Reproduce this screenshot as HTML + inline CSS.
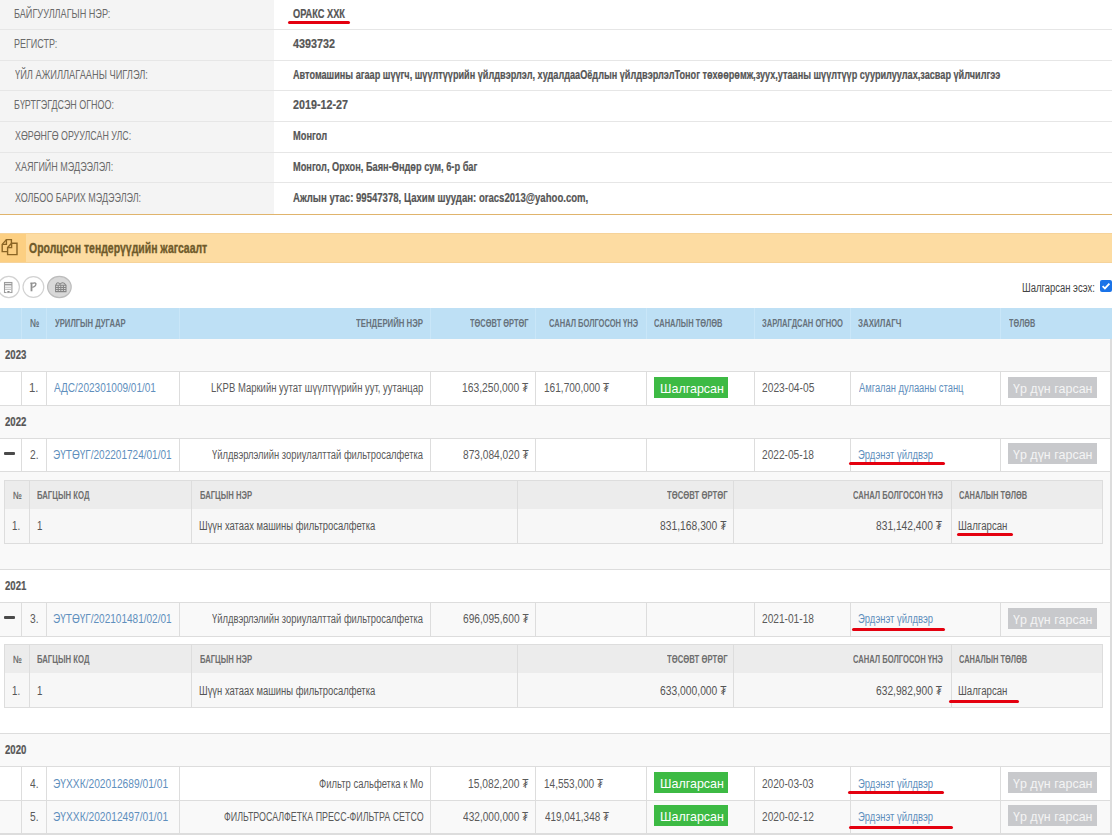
<!DOCTYPE html><html><head><meta charset="utf-8"><style>
*{margin:0;padding:0;box-sizing:border-box}
html,body{width:1118px;height:838px;overflow:hidden;background:#fff;font-family:'Liberation Sans', sans-serif}
.t{position:absolute;white-space:nowrap;transform-origin:0 50%}
.b{position:absolute}
</style></head><body>
<div class="b" style="left:0px;top:0px;width:274px;height:214px;background:#f4f4f4"></div>
<div class="b" style="left:0px;top:29px;width:1112px;height:1px;background:#e6e6e6"></div>
<div class="b" style="left:0px;top:60px;width:1112px;height:1px;background:#e6e6e6"></div>
<div class="b" style="left:0px;top:90px;width:1112px;height:1px;background:#e6e6e6"></div>
<div class="b" style="left:0px;top:121px;width:1112px;height:1px;background:#e6e6e6"></div>
<div class="b" style="left:0px;top:152px;width:1112px;height:1px;background:#e6e6e6"></div>
<div class="b" style="left:0px;top:182px;width:1112px;height:1px;background:#e6e6e6"></div>
<div class="b" style="left:0px;top:214px;width:1112px;height:1px;background:#e0b46c"></div>
<div class="b" style="left:287.5px;top:20.9px;width:62.30000000000001px;height:3px;background:#e4000f;border-radius:2px"></div>
<div class="b" style="left:0px;top:233px;width:1112px;height:30px;background:#fddca2"></div>
<div class="b" style="left:0px;top:233px;width:26px;height:30px;background:#fccf82"></div>
<div class="b" style="left:0px;top:233px;width:1112px;height:1px;background:#f6d39a"></div>
<div class="b" style="left:0px;top:262px;width:1112px;height:1px;background:#f6d39a"></div>
<svg class="b" style="left:0;top:235px" width="24" height="25" viewBox="0 0 24 25">
<g fill="none" stroke="#8a6424" stroke-width="1.4" stroke-linejoin="miter">
<path d="M7.5 16.6 H2.2 V9.4 L6.4 4.6 H11.4 V8.3"/>
<path d="M2.2 9.4 H6.4 V4.6"/>
<path d="M7.6 12.6 L11.6 8.3 H17 V19.6 H7.6 Z"/>
<path d="M7.6 12.6 H11.6 V8.3"/>
</g></svg>
<svg class="b" style="left:0;top:270px" width="80" height="34" viewBox="0 0 80 34">
<circle cx="8.8" cy="17" r="10.6" fill="#fff" stroke="#d2d2d2" stroke-width="1.2"/>
<circle cx="33.4" cy="17" r="10.4" fill="#fff" stroke="#d2d2d2" stroke-width="1.2"/>
<ellipse cx="59.4" cy="17" rx="11.8" ry="10.6" fill="#d8d8d8" stroke="#bcbcbc" stroke-width="1.2"/>
<g fill="none" stroke="#9c9c9c" stroke-width="1.1">
<rect x="4.5" y="12.5" width="7.4" height="10"/>
<path d="M4.5 14.6 H11.9" stroke-width="1.6"/>
<path d="M5 17.2 H11.4 M5 19.4 H11.4" stroke="#c4c4c4"/>
</g>
<path d="M6.2 22.6 V21.4 Q8.2 19.6 10.2 21.4 V22.6 Z" fill="#fff"/>
<rect x="7.4" y="21" width="2.2" height="1.6" fill="#8a8a8a"/>
<g fill="none" stroke="#8f8f8f">
<path d="M31.5 12.8 V21.3" stroke-width="1.8"/>
<path d="M30.4 13.2 H32.4" stroke-width="1.2"/>
<path d="M32.3 13.4 Q35.2 12.2 35.9 13.6 Q36.2 16.2 32.3 17.4" stroke-width="1.3"/>
</g>
<g fill="none" stroke="#858585" stroke-width="1.05">
<path d="M55.6 15.2 H66 V21.6 H55.6 Z"/>
<path d="M55.6 17.4 H66 M55.6 19.5 H66 M58.2 15.2 V21.6 M60.8 15.2 V21.6 M63.4 15.2 V21.6"/>
<path d="M56 15.2 Q56.4 12.6 58 12.8 Q59.6 13 60 14.6 Q60.4 13 62.4 12.8 Q64.8 12.6 65.6 15.2"/>
</g>
</svg>
<svg class="b" style="left:1100px;top:280px" width="12" height="12" viewBox="0 0 12 12">
<rect x="0" y="0" width="12" height="12" rx="2" fill="#1a73e8"/>
<path d="M2.6 6.2 L4.9 8.4 L9.4 3.6" fill="none" stroke="#fff" stroke-width="1.8"/>
</svg>
<div class="b" style="left:0px;top:308px;width:1111.5px;height:31px;background:#bee0f5"></div>
<div class="b" style="left:21px;top:308px;width:1px;height:31px;background:#c9e6f8"></div>
<div class="b" style="left:46px;top:308px;width:1px;height:31px;background:#c9e6f8"></div>
<div class="b" style="left:179px;top:308px;width:1px;height:31px;background:#c9e6f8"></div>
<div class="b" style="left:430px;top:308px;width:1px;height:31px;background:#c9e6f8"></div>
<div class="b" style="left:535px;top:308px;width:1px;height:31px;background:#c9e6f8"></div>
<div class="b" style="left:646px;top:308px;width:1px;height:31px;background:#c9e6f8"></div>
<div class="b" style="left:754px;top:308px;width:1px;height:31px;background:#c9e6f8"></div>
<div class="b" style="left:850px;top:308px;width:1px;height:31px;background:#c9e6f8"></div>
<div class="b" style="left:1000px;top:308px;width:1px;height:31px;background:#c9e6f8"></div>
<div class="b" style="left:0px;top:339px;width:1111.5px;height:32px;background:#f9f9f9"></div>
<div class="b" style="left:0px;top:371px;width:1111.5px;height:34px;background:#fff"></div>
<div class="b" style="left:0px;top:405px;width:1111.5px;height:33px;background:#f9f9f9"></div>
<div class="b" style="left:0px;top:438px;width:1111.5px;height:33px;background:#fff"></div>
<div class="b" style="left:0px;top:471px;width:1111.5px;height:98px;background:#f9f9f9"></div>
<div class="b" style="left:0px;top:569px;width:1111.5px;height:33px;background:#fff"></div>
<div class="b" style="left:0px;top:602px;width:1111.5px;height:34px;background:#f9f9f9"></div>
<div class="b" style="left:0px;top:636px;width:1111.5px;height:97px;background:#fff"></div>
<div class="b" style="left:0px;top:733px;width:1111.5px;height:33px;background:#f9f9f9"></div>
<div class="b" style="left:0px;top:766px;width:1111.5px;height:34px;background:#fff"></div>
<div class="b" style="left:0px;top:800px;width:1111.5px;height:33px;background:#f9f9f9"></div>
<div class="b" style="left:0px;top:371px;width:1111.5px;height:1px;background:#dddddd"></div>
<div class="b" style="left:0px;top:405px;width:1111.5px;height:1px;background:#dddddd"></div>
<div class="b" style="left:0px;top:438px;width:1111.5px;height:1px;background:#dddddd"></div>
<div class="b" style="left:0px;top:471px;width:1111.5px;height:1px;background:#dddddd"></div>
<div class="b" style="left:0px;top:569px;width:1111.5px;height:1px;background:#dddddd"></div>
<div class="b" style="left:0px;top:602px;width:1111.5px;height:1px;background:#dddddd"></div>
<div class="b" style="left:0px;top:636px;width:1111.5px;height:1px;background:#dddddd"></div>
<div class="b" style="left:0px;top:733px;width:1111.5px;height:1px;background:#dddddd"></div>
<div class="b" style="left:0px;top:766px;width:1111.5px;height:1px;background:#dddddd"></div>
<div class="b" style="left:0px;top:800px;width:1111.5px;height:1px;background:#dddddd"></div>
<div class="b" style="left:0px;top:833px;width:1111.5px;height:2px;background:#dddddd"></div>
<div class="b" style="left:1110px;top:339px;width:2px;height:496px;background:#dcdcdc"></div>
<div class="b" style="left:21px;top:371px;width:1px;height:34px;background:#dddddd"></div>
<div class="b" style="left:46px;top:371px;width:1px;height:34px;background:#dddddd"></div>
<div class="b" style="left:179px;top:371px;width:1px;height:34px;background:#dddddd"></div>
<div class="b" style="left:430px;top:371px;width:1px;height:34px;background:#dddddd"></div>
<div class="b" style="left:535px;top:371px;width:1px;height:34px;background:#dddddd"></div>
<div class="b" style="left:646px;top:371px;width:1px;height:34px;background:#dddddd"></div>
<div class="b" style="left:754px;top:371px;width:1px;height:34px;background:#dddddd"></div>
<div class="b" style="left:850px;top:371px;width:1px;height:34px;background:#dddddd"></div>
<div class="b" style="left:1000px;top:371px;width:1px;height:34px;background:#dddddd"></div>
<div class="b" style="left:21px;top:438px;width:1px;height:33px;background:#dddddd"></div>
<div class="b" style="left:46px;top:438px;width:1px;height:33px;background:#dddddd"></div>
<div class="b" style="left:179px;top:438px;width:1px;height:33px;background:#dddddd"></div>
<div class="b" style="left:430px;top:438px;width:1px;height:33px;background:#dddddd"></div>
<div class="b" style="left:535px;top:438px;width:1px;height:33px;background:#dddddd"></div>
<div class="b" style="left:646px;top:438px;width:1px;height:33px;background:#dddddd"></div>
<div class="b" style="left:754px;top:438px;width:1px;height:33px;background:#dddddd"></div>
<div class="b" style="left:850px;top:438px;width:1px;height:33px;background:#dddddd"></div>
<div class="b" style="left:1000px;top:438px;width:1px;height:33px;background:#dddddd"></div>
<div class="b" style="left:21px;top:602px;width:1px;height:34px;background:#dddddd"></div>
<div class="b" style="left:46px;top:602px;width:1px;height:34px;background:#dddddd"></div>
<div class="b" style="left:179px;top:602px;width:1px;height:34px;background:#dddddd"></div>
<div class="b" style="left:430px;top:602px;width:1px;height:34px;background:#dddddd"></div>
<div class="b" style="left:535px;top:602px;width:1px;height:34px;background:#dddddd"></div>
<div class="b" style="left:646px;top:602px;width:1px;height:34px;background:#dddddd"></div>
<div class="b" style="left:754px;top:602px;width:1px;height:34px;background:#dddddd"></div>
<div class="b" style="left:850px;top:602px;width:1px;height:34px;background:#dddddd"></div>
<div class="b" style="left:1000px;top:602px;width:1px;height:34px;background:#dddddd"></div>
<div class="b" style="left:21px;top:766px;width:1px;height:34px;background:#dddddd"></div>
<div class="b" style="left:46px;top:766px;width:1px;height:34px;background:#dddddd"></div>
<div class="b" style="left:179px;top:766px;width:1px;height:34px;background:#dddddd"></div>
<div class="b" style="left:430px;top:766px;width:1px;height:34px;background:#dddddd"></div>
<div class="b" style="left:535px;top:766px;width:1px;height:34px;background:#dddddd"></div>
<div class="b" style="left:646px;top:766px;width:1px;height:34px;background:#dddddd"></div>
<div class="b" style="left:754px;top:766px;width:1px;height:34px;background:#dddddd"></div>
<div class="b" style="left:850px;top:766px;width:1px;height:34px;background:#dddddd"></div>
<div class="b" style="left:1000px;top:766px;width:1px;height:34px;background:#dddddd"></div>
<div class="b" style="left:21px;top:800px;width:1px;height:33px;background:#dddddd"></div>
<div class="b" style="left:46px;top:800px;width:1px;height:33px;background:#dddddd"></div>
<div class="b" style="left:179px;top:800px;width:1px;height:33px;background:#dddddd"></div>
<div class="b" style="left:430px;top:800px;width:1px;height:33px;background:#dddddd"></div>
<div class="b" style="left:535px;top:800px;width:1px;height:33px;background:#dddddd"></div>
<div class="b" style="left:646px;top:800px;width:1px;height:33px;background:#dddddd"></div>
<div class="b" style="left:754px;top:800px;width:1px;height:33px;background:#dddddd"></div>
<div class="b" style="left:850px;top:800px;width:1px;height:33px;background:#dddddd"></div>
<div class="b" style="left:1000px;top:800px;width:1px;height:33px;background:#dddddd"></div>
<div class="b" style="left:654px;top:377px;width:74px;height:21px;background:#3dba44"></div>
<span class="t" style="left:660.4px;top:382px;font-size:13px;line-height:13px;color:#ffffff;transform:scaleX(0.96)">Шалгарсан</span>
<div class="b" style="left:1008px;top:377px;width:89px;height:21px;background:#c8c9cc"></div>
<span class="t" style="left:1013px;top:382px;font-size:13px;line-height:13px;color:#f4f4f4;transform:scaleX(0.96)">Үр дүн гарсан</span>
<div class="b" style="left:1008px;top:443px;width:89px;height:21px;background:#c8c9cc"></div>
<span class="t" style="left:1013px;top:448px;font-size:13px;line-height:13px;color:#f4f4f4;transform:scaleX(0.96)">Үр дүн гарсан</span>
<div class="b" style="left:4.2px;top:452px;width:10.7px;height:2.7px;background:#4a4a4a;border-radius:1px"></div>
<div class="b" style="left:849.4px;top:462.09999999999997px;width:95.20000000000005px;height:2.6px;background:#e4000f;border-radius:2px"></div>
<div class="b" style="left:1008px;top:608px;width:89px;height:21px;background:#c8c9cc"></div>
<span class="t" style="left:1013px;top:613px;font-size:13px;line-height:13px;color:#f4f4f4;transform:scaleX(0.96)">Үр дүн гарсан</span>
<div class="b" style="left:4.2px;top:616px;width:10.7px;height:2.7px;background:#4a4a4a;border-radius:1px"></div>
<div class="b" style="left:852.3px;top:628.2px;width:92.30000000000007px;height:2.6px;background:#e4000f;border-radius:2px"></div>
<div class="b" style="left:654px;top:772px;width:74px;height:21px;background:#3dba44"></div>
<span class="t" style="left:660.4px;top:777px;font-size:13px;line-height:13px;color:#ffffff;transform:scaleX(0.96)">Шалгарсан</span>
<div class="b" style="left:1008px;top:772px;width:89px;height:21px;background:#c8c9cc"></div>
<span class="t" style="left:1013px;top:777px;font-size:13px;line-height:13px;color:#f4f4f4;transform:scaleX(0.96)">Үр дүн гарсан</span>
<div class="b" style="left:848.4px;top:791.4000000000001px;width:95.5px;height:2.6px;background:#e4000f;border-radius:2px"></div>
<div class="b" style="left:654px;top:805px;width:74px;height:21px;background:#3dba44"></div>
<span class="t" style="left:660.4px;top:810px;font-size:13px;line-height:13px;color:#ffffff;transform:scaleX(0.96)">Шалгарсан</span>
<div class="b" style="left:1008px;top:805px;width:89px;height:21px;background:#c8c9cc"></div>
<span class="t" style="left:1013px;top:810px;font-size:13px;line-height:13px;color:#f4f4f4;transform:scaleX(0.96)">Үр дүн гарсан</span>
<div class="b" style="left:849.4px;top:826.0px;width:103.30000000000007px;height:2.6px;background:#e4000f;border-radius:2px"></div>
<div class="b" style="left:4.2px;top:480.2px;width:1098.4px;height:29px;background:#ececec"></div>
<div class="b" style="left:4.2px;top:509.2px;width:1098.4px;height:34px;background:#f7f7f7"></div>
<div class="b" style="left:4.2px;top:480.2px;width:1098.4px;height:63.5px;border:1px solid #dddddd"></div>
<div class="b" style="left:29.2px;top:480.2px;width:1px;height:63.5px;background:#dddddd"></div>
<div class="b" style="left:191.3px;top:480.2px;width:1px;height:63.5px;background:#dddddd"></div>
<div class="b" style="left:516.5px;top:480.2px;width:1px;height:63.5px;background:#dddddd"></div>
<div class="b" style="left:733.2px;top:480.2px;width:1px;height:63.5px;background:#dddddd"></div>
<div class="b" style="left:950.8px;top:480.2px;width:1px;height:63.5px;background:#dddddd"></div>
<div class="b" style="left:956.5px;top:533.2px;width:56.39999999999998px;height:2.6px;background:#e4000f;border-radius:2px"></div>
<div class="b" style="left:4.2px;top:644.3px;width:1098.4px;height:29px;background:#ececec"></div>
<div class="b" style="left:4.2px;top:673.3px;width:1098.4px;height:34px;background:#f7f7f7"></div>
<div class="b" style="left:4.2px;top:644.3px;width:1098.4px;height:63.5px;border:1px solid #dddddd"></div>
<div class="b" style="left:29.2px;top:644.3px;width:1px;height:63.5px;background:#dddddd"></div>
<div class="b" style="left:191.3px;top:644.3px;width:1px;height:63.5px;background:#dddddd"></div>
<div class="b" style="left:516.5px;top:644.3px;width:1px;height:63.5px;background:#dddddd"></div>
<div class="b" style="left:733.2px;top:644.3px;width:1px;height:63.5px;background:#dddddd"></div>
<div class="b" style="left:950.8px;top:644.3px;width:1px;height:63.5px;background:#dddddd"></div>
<div class="b" style="left:949.4px;top:700.2px;width:69.30000000000007px;height:2.6px;background:#e4000f;border-radius:2px"></div>
<span id="t0" class="t" style="left:13.97px;top:8px;font-size:12.5px;line-height:12.5px;font-weight:400;color:#6a6a6a;transform:scaleX(0.7292);">БАЙГУУЛЛАГЫН НЭР:</span>
<span id="t1" class="t" style="left:13.98px;top:38px;font-size:12.5px;line-height:12.5px;font-weight:400;color:#6a6a6a;transform:scaleX(0.7190);">РЕГИСТР:</span>
<span id="t2" class="t" style="left:14.7px;top:69px;font-size:12.5px;line-height:12.5px;font-weight:400;color:#6a6a6a;transform:scaleX(0.7416);">ҮЙЛ АЖИЛЛАГААНЫ ЧИГЛЭЛ:</span>
<span id="t3" class="t" style="left:13.98px;top:99px;font-size:12.5px;line-height:12.5px;font-weight:400;color:#6a6a6a;transform:scaleX(0.7167);">БҮРТГЭГДСЭН ОГНОО:</span>
<span id="t4" class="t" style="left:14.7px;top:130px;font-size:12.5px;line-height:12.5px;font-weight:400;color:#6a6a6a;transform:scaleX(0.7067);">ХӨРӨНГӨ ОРУУЛСАН УЛС:</span>
<span id="t5" class="t" style="left:14.7px;top:161px;font-size:12.5px;line-height:12.5px;font-weight:400;color:#6a6a6a;transform:scaleX(0.7206);">ХАЯГИЙН МЭДЭЭЛЭЛ:</span>
<span id="t6" class="t" style="left:14.7px;top:192px;font-size:12.5px;line-height:12.5px;font-weight:400;color:#6a6a6a;transform:scaleX(0.7183);">ХОЛБОО БАРИХ МЭДЭЭЛЭЛ:</span>
<span id="t7" class="t" style="left:293.0px;top:8px;font-size:12.5px;line-height:12.5px;font-weight:700;color:#555555;transform:scaleX(0.7394);-webkit-text-stroke:0.2px #555555;">ОРАКС ХХК</span>
<span id="t8" class="t" style="left:293.0px;top:38px;font-size:12.5px;line-height:12.5px;font-weight:700;color:#555555;transform:scaleX(0.8612);-webkit-text-stroke:0.2px #555555;">4393732</span>
<span id="t9" class="t" style="left:293.0px;top:69px;font-size:12.5px;line-height:12.5px;font-weight:700;color:#555555;transform:scaleX(0.7302);-webkit-text-stroke:0.2px #555555;">Автомашины агаар шүүгч, шүүлтүүрийн үйлдвэрлэл, худалдааОёдлын үйлдвэрлэлТоног төхөөрөмж,зуух,утааны шүүлтүүр суурилуулах,засвар үйлчилгээ</span>
<span id="t10" class="t" style="left:293.0px;top:99px;font-size:12.5px;line-height:12.5px;font-weight:700;color:#555555;transform:scaleX(0.8594);-webkit-text-stroke:0.2px #555555;">2019-12-27</span>
<span id="t11" class="t" style="left:293.0px;top:130px;font-size:12.5px;line-height:12.5px;font-weight:700;color:#555555;transform:scaleX(0.7435);-webkit-text-stroke:0.2px #555555;">Монгол</span>
<span id="t12" class="t" style="left:293.0px;top:161px;font-size:12.5px;line-height:12.5px;font-weight:700;color:#555555;transform:scaleX(0.7380);-webkit-text-stroke:0.2px #555555;">Монгол, Орхон, Баян-Өндөр сум, 6-р баг</span>
<span id="t13" class="t" style="left:293.0px;top:192px;font-size:12.5px;line-height:12.5px;font-weight:700;color:#555555;transform:scaleX(0.7655);-webkit-text-stroke:0.2px #555555;">Ажлын утас: 99547378, Цахим шуудан: oracs2013@yahoo.com,</span>
<span id="t14" class="t" style="left:28.6px;top:241px;font-size:14px;line-height:14px;font-weight:700;color:#6f5a2a;transform:scaleX(0.7464);-webkit-text-stroke:0.35px #6f5a2a;">Оролцсон тендерүүдийн жагсаалт</span>
<span id="t15" class="t" style="left:1022.34px;top:282px;font-size:12.5px;line-height:12.5px;font-weight:400;color:#444444;transform:scaleX(0.7574);">Шалгарсан эсэх:</span>
<span id="t16" class="t" style="left:29.5px;top:318px;font-size:11.5px;line-height:11.5px;font-weight:700;color:#66727c;transform:scaleX(0.7308);">№</span>
<span id="t17" class="t" style="left:54.6px;top:318px;font-size:11.5px;line-height:11.5px;font-weight:700;color:#66727c;transform:scaleX(0.6660);">УРИЛГЫН ДУГААР</span>
<span id="t18" class="t" style="left:355.8px;top:318px;font-size:11.5px;line-height:11.5px;font-weight:700;color:#66727c;transform:scaleX(0.6788);">ТЕНДЕРИЙН НЭР</span>
<span id="t19" class="t" style="left:469.6px;top:318px;font-size:11.5px;line-height:11.5px;font-weight:700;color:#66727c;transform:scaleX(0.6489);">ТӨСӨВТ ӨРТӨГ</span>
<span id="t20" class="t" style="left:549.3px;top:318px;font-size:11.5px;line-height:11.5px;font-weight:700;color:#66727c;transform:scaleX(0.6551);">САНАЛ БОЛГОСОН ҮНЭ</span>
<span id="t21" class="t" style="left:654.2px;top:318px;font-size:11.5px;line-height:11.5px;font-weight:700;color:#66727c;transform:scaleX(0.6514);">САНАЛЫН ТӨЛӨВ</span>
<span id="t22" class="t" style="left:762.0px;top:318px;font-size:11.5px;line-height:11.5px;font-weight:700;color:#66727c;transform:scaleX(0.6593);">ЗАРЛАГДСАН ОГНОО</span>
<span id="t23" class="t" style="left:858.3px;top:318px;font-size:11.5px;line-height:11.5px;font-weight:700;color:#66727c;transform:scaleX(0.6935);">ЗАХИЛАГЧ</span>
<span id="t24" class="t" style="left:1008.8px;top:318px;font-size:11.5px;line-height:11.5px;font-weight:700;color:#66727c;transform:scaleX(0.6341);">ТӨЛӨВ</span>
<span id="t25" class="t" style="left:4.5px;top:349px;font-size:12.5px;line-height:12.5px;font-weight:700;color:#555555;transform:scaleX(0.7679);-webkit-text-stroke:0.2px #555555;">2023</span>
<span id="t26" class="t" style="left:4.5px;top:416px;font-size:12.5px;line-height:12.5px;font-weight:700;color:#555555;transform:scaleX(0.7679);-webkit-text-stroke:0.2px #555555;">2022</span>
<span id="t27" class="t" style="left:4.5px;top:580px;font-size:12.5px;line-height:12.5px;font-weight:700;color:#555555;transform:scaleX(0.7679);-webkit-text-stroke:0.2px #555555;">2021</span>
<span id="t28" class="t" style="left:4.5px;top:744px;font-size:12.5px;line-height:12.5px;font-weight:700;color:#555555;transform:scaleX(0.7679);-webkit-text-stroke:0.2px #555555;">2020</span>
<span id="t29" class="t" style="left:28.59px;top:382px;font-size:12.5px;line-height:12.5px;font-weight:400;color:#5a5a5a;transform:scaleX(0.9111);">1.</span>
<span id="t30" class="t" style="left:54.2px;top:382px;font-size:12.5px;line-height:12.5px;font-weight:400;color:#5f8fbd;transform:scaleX(0.8024);">АДС/202301009/01/01</span>
<span id="t31" class="t" style="left:210.54px;top:382px;font-size:12.5px;line-height:12.5px;font-weight:400;color:#5a5a5a;transform:scaleX(0.7588);">LKPB Маркийн уутат шүүлтүүрийн уут, уутанцар</span>
<span id="t32" class="t" style="left:461.78px;top:382px;font-size:12.5px;line-height:12.5px;font-weight:400;color:#5a5a5a;transform:scaleX(0.8237);">163,250,000 ₮</span>
<span id="t33" class="t" style="left:543.79px;top:382px;font-size:12.5px;line-height:12.5px;font-weight:400;color:#5a5a5a;transform:scaleX(0.8075);">161,700,000 ₮</span>
<span id="t34" class="t" style="left:762.2px;top:382px;font-size:12.5px;line-height:12.5px;font-weight:400;color:#5a5a5a;transform:scaleX(0.8187);">2023-04-05</span>
<span id="t35" class="t" style="left:858.5px;top:382px;font-size:12.5px;line-height:12.5px;font-weight:400;color:#5f8fbd;transform:scaleX(0.7486);">Амгалан дулааны станц</span>
<span id="t36" class="t" style="left:29.5px;top:449px;font-size:12.5px;line-height:12.5px;font-weight:400;color:#5a5a5a;transform:scaleX(0.8200);">2.</span>
<span id="t37" class="t" style="left:53.4px;top:449px;font-size:12.5px;line-height:12.5px;font-weight:400;color:#5f8fbd;transform:scaleX(0.8027);">ЭҮТӨҮГ/202201724/01/01</span>
<span id="t38" class="t" style="left:212.2px;top:449px;font-size:12.5px;line-height:12.5px;font-weight:400;color:#5a5a5a;transform:scaleX(0.7502);">Үйлдвэрлэлийн зориулалттай фильтросалфетка</span>
<span id="t39" class="t" style="left:462.6px;top:449px;font-size:12.5px;line-height:12.5px;font-weight:400;color:#5a5a5a;transform:scaleX(0.8136);">873,084,020 ₮</span>
<span id="t40" class="t" style="left:762.2px;top:449px;font-size:12.5px;line-height:12.5px;font-weight:400;color:#5a5a5a;transform:scaleX(0.8125);">2022-05-18</span>
<span id="t41" class="t" style="left:857.74px;top:449px;font-size:12.5px;line-height:12.5px;font-weight:400;color:#5f8fbd;transform:scaleX(0.7551);">Эрдэнэт үйлдвэр</span>
<span id="t42" class="t" style="left:29.5px;top:613px;font-size:12.5px;line-height:12.5px;font-weight:400;color:#5a5a5a;transform:scaleX(0.8200);">3.</span>
<span id="t43" class="t" style="left:53.4px;top:613px;font-size:12.5px;line-height:12.5px;font-weight:400;color:#5f8fbd;transform:scaleX(0.8027);">ЭҮТӨҮГ/202101481/02/01</span>
<span id="t44" class="t" style="left:212.2px;top:613px;font-size:12.5px;line-height:12.5px;font-weight:400;color:#5a5a5a;transform:scaleX(0.7502);">Үйлдвэрлэлийн зориулалттай фильтросалфетка</span>
<span id="t45" class="t" style="left:462.6px;top:613px;font-size:12.5px;line-height:12.5px;font-weight:400;color:#5a5a5a;transform:scaleX(0.8136);">696,095,600 ₮</span>
<span id="t46" class="t" style="left:762.2px;top:613px;font-size:12.5px;line-height:12.5px;font-weight:400;color:#5a5a5a;transform:scaleX(0.8125);">2021-01-18</span>
<span id="t47" class="t" style="left:857.74px;top:613px;font-size:12.5px;line-height:12.5px;font-weight:400;color:#5f8fbd;transform:scaleX(0.7551);">Эрдэнэт үйлдвэр</span>
<span id="t48" class="t" style="left:29.5px;top:778px;font-size:12.5px;line-height:12.5px;font-weight:400;color:#5a5a5a;transform:scaleX(0.8200);">4.</span>
<span id="t49" class="t" style="left:53.38px;top:778px;font-size:12.5px;line-height:12.5px;font-weight:400;color:#5f8fbd;transform:scaleX(0.8179);">ЭҮХХК/202012689/01/01</span>
<span id="t50" class="t" style="left:318.5px;top:778px;font-size:12.5px;line-height:12.5px;font-weight:400;color:#5a5a5a;transform:scaleX(0.7572);">Фильтр сальфетка к Мо</span>
<span id="t51" class="t" style="left:467.78px;top:778px;font-size:12.5px;line-height:12.5px;font-weight:400;color:#5a5a5a;transform:scaleX(0.8205);">15,082,200 ₮</span>
<span id="t52" class="t" style="left:543.8px;top:778px;font-size:12.5px;line-height:12.5px;font-weight:400;color:#5a5a5a;transform:scaleX(0.8014);">14,553,000 ₮</span>
<span id="t53" class="t" style="left:762.2px;top:778px;font-size:12.5px;line-height:12.5px;font-weight:400;color:#5a5a5a;transform:scaleX(0.8078);">2020-03-03</span>
<span id="t54" class="t" style="left:857.74px;top:778px;font-size:12.5px;line-height:12.5px;font-weight:400;color:#5f8fbd;transform:scaleX(0.7551);">Эрдэнэт үйлдвэр</span>
<span id="t55" class="t" style="left:29.5px;top:811px;font-size:12.5px;line-height:12.5px;font-weight:400;color:#5a5a5a;transform:scaleX(0.8200);">5.</span>
<span id="t56" class="t" style="left:53.38px;top:811px;font-size:12.5px;line-height:12.5px;font-weight:400;color:#5f8fbd;transform:scaleX(0.8179);">ЭҮХХК/202012497/01/01</span>
<span id="t57" class="t" style="left:223.5px;top:811px;font-size:12.5px;line-height:12.5px;font-weight:400;color:#5a5a5a;transform:scaleX(0.7100);">ФИЛЬТРОСАЛФЕТКА ПРЕСС-ФИЛЬТРА CETCO</span>
<span id="t58" class="t" style="left:462.9px;top:811px;font-size:12.5px;line-height:12.5px;font-weight:400;color:#5a5a5a;transform:scaleX(0.8099);">432,000,000 ₮</span>
<span id="t59" class="t" style="left:544.6px;top:811px;font-size:12.5px;line-height:12.5px;font-weight:400;color:#5a5a5a;transform:scaleX(0.7938);">419,041,348 ₮</span>
<span id="t60" class="t" style="left:762.2px;top:811px;font-size:12.5px;line-height:12.5px;font-weight:400;color:#5a5a5a;transform:scaleX(0.8125);">2020-02-12</span>
<span id="t61" class="t" style="left:857.74px;top:811px;font-size:12.5px;line-height:12.5px;font-weight:400;color:#5f8fbd;transform:scaleX(0.7551);">Эрдэнэт үйлдвэр</span>
<span id="t62" class="t" style="left:13.0px;top:490px;font-size:11px;line-height:11px;font-weight:700;color:#6e6e6e;transform:scaleX(0.7167);">№</span>
<span id="t63" class="t" style="left:37.2px;top:490px;font-size:11px;line-height:11px;font-weight:700;color:#6e6e6e;transform:scaleX(0.7040);">БАГЦЫН КОД</span>
<span id="t64" class="t" style="left:199.7px;top:490px;font-size:11px;line-height:11px;font-weight:700;color:#6e6e6e;transform:scaleX(0.6973);">БАГЦЫН НЭР</span>
<span id="t65" class="t" style="left:666.5px;top:490px;font-size:11px;line-height:11px;font-weight:700;color:#6e6e6e;transform:scaleX(0.7012);">ТӨСӨВТ ӨРТӨГ</span>
<span id="t66" class="t" style="left:852.9px;top:490px;font-size:11px;line-height:11px;font-weight:700;color:#6e6e6e;transform:scaleX(0.6908);">САНАЛ БОЛГОСОН ҮНЭ</span>
<span id="t67" class="t" style="left:958.5px;top:490px;font-size:11px;line-height:11px;font-weight:700;color:#6e6e6e;transform:scaleX(0.6782);">САНАЛЫН ТӨЛӨВ</span>
<span id="t68" class="t" style="left:12.22px;top:520px;font-size:12.5px;line-height:12.5px;font-weight:400;color:#555555;transform:scaleX(0.7778);">1.</span>
<span id="t69" class="t" style="left:36.82px;top:520px;font-size:12.5px;line-height:12.5px;font-weight:400;color:#555555;transform:scaleX(0.7778);">1</span>
<span id="t70" class="t" style="left:198.95px;top:520px;font-size:12.5px;line-height:12.5px;font-weight:400;color:#555555;transform:scaleX(0.7541);">Шүүн хатаах машины фильтросалфетка</span>
<span id="t71" class="t" style="left:660.0px;top:520px;font-size:12.5px;line-height:12.5px;font-weight:400;color:#555555;transform:scaleX(0.8247);">831,168,300 ₮</span>
<span id="t72" class="t" style="left:876.4px;top:520px;font-size:12.5px;line-height:12.5px;font-weight:400;color:#555555;transform:scaleX(0.8185);">831,142,400 ₮</span>
<span id="t73" class="t" style="left:957.53px;top:520px;font-size:12.5px;line-height:12.5px;font-weight:400;color:#555555;transform:scaleX(0.7726);">Шалгарсан</span>
<span id="t74" class="t" style="left:13.0px;top:654px;font-size:11px;line-height:11px;font-weight:700;color:#6e6e6e;transform:scaleX(0.7167);">№</span>
<span id="t75" class="t" style="left:37.2px;top:654px;font-size:11px;line-height:11px;font-weight:700;color:#6e6e6e;transform:scaleX(0.7040);">БАГЦЫН КОД</span>
<span id="t76" class="t" style="left:199.7px;top:654px;font-size:11px;line-height:11px;font-weight:700;color:#6e6e6e;transform:scaleX(0.6973);">БАГЦЫН НЭР</span>
<span id="t77" class="t" style="left:666.5px;top:654px;font-size:11px;line-height:11px;font-weight:700;color:#6e6e6e;transform:scaleX(0.7012);">ТӨСӨВТ ӨРТӨГ</span>
<span id="t78" class="t" style="left:852.9px;top:654px;font-size:11px;line-height:11px;font-weight:700;color:#6e6e6e;transform:scaleX(0.6908);">САНАЛ БОЛГОСОН ҮНЭ</span>
<span id="t79" class="t" style="left:958.5px;top:654px;font-size:11px;line-height:11px;font-weight:700;color:#6e6e6e;transform:scaleX(0.6782);">САНАЛЫН ТӨЛӨВ</span>
<span id="t80" class="t" style="left:12.22px;top:685px;font-size:12.5px;line-height:12.5px;font-weight:400;color:#555555;transform:scaleX(0.7778);">1.</span>
<span id="t81" class="t" style="left:36.82px;top:685px;font-size:12.5px;line-height:12.5px;font-weight:400;color:#555555;transform:scaleX(0.7778);">1</span>
<span id="t82" class="t" style="left:198.95px;top:685px;font-size:12.5px;line-height:12.5px;font-weight:400;color:#555555;transform:scaleX(0.7541);">Шүүн хатаах машины фильтросалфетка</span>
<span id="t83" class="t" style="left:660.0px;top:685px;font-size:12.5px;line-height:12.5px;font-weight:400;color:#555555;transform:scaleX(0.8247);">633,000,000 ₮</span>
<span id="t84" class="t" style="left:876.4px;top:685px;font-size:12.5px;line-height:12.5px;font-weight:400;color:#555555;transform:scaleX(0.8185);">632,982,900 ₮</span>
<span id="t85" class="t" style="left:957.53px;top:685px;font-size:12.5px;line-height:12.5px;font-weight:400;color:#555555;transform:scaleX(0.7726);">Шалгарсан</span>
</body></html>
